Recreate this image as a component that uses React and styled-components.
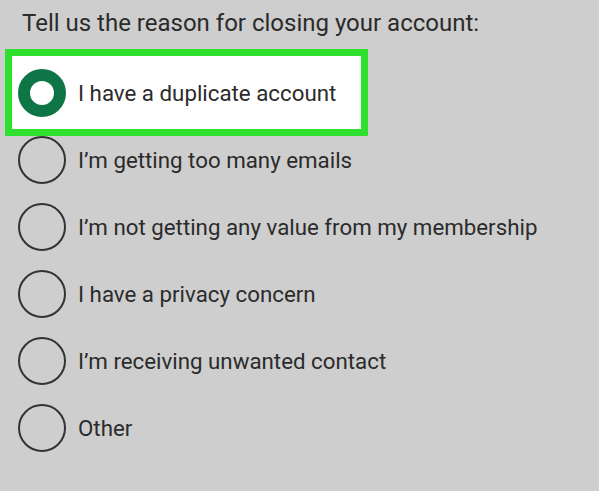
import React, { useState } from "react";
import styled, { createGlobalStyle } from "styled-components";

const GlobalStyle = createGlobalStyle`
  html, body {
    margin: 0;
    padding: 0;
    background: #cecece;
  }
  body {
    font-family: Roboto, "Noto Sans", Arial, sans-serif;
    color: #2b2b2b;
  }
`;

const Page = styled.div`
  width: 599px;
  height: 491px;
  padding: 9px 0 0 22px;
  box-sizing: border-box;
  background: #cecece;
  overflow: hidden;
`;

const Heading = styled.h1`
  margin: 0 0 22px 0;
  font-size: 24px;
  font-weight: 400;
  line-height: 28px;
  color: #2b2b2b;
`;

const List = styled.div`
  display: flex;
  flex-direction: column;
  margin-left: -7px;
`;

const Row = styled.label`
  display: flex;
  align-items: center;
  gap: 12px;
  height: 67px;
  padding-left: 3px;
  cursor: pointer;
  width: ${(p) => (p.$selected ? "343px" : "auto")};
  box-sizing: border-box;
  background: ${(p) => (p.$selected ? "#ffffff" : "transparent")};
  outline: ${(p) => (p.$selected ? "7px solid #2fe02f" : "none")};
  outline-offset: 3px;
  box-shadow: ${(p) => (p.$selected ? "0 0 0 3px #ffffff" : "none")};
`;

const Radio = styled.span`
  flex: none;
  width: 48px;
  height: 48px;
  border-radius: 50%;
  box-sizing: border-box;
  border: ${(p) => (p.$checked ? "12px solid #0e7646" : "2px solid #333333")};
  background: ${(p) => (p.$checked ? "#ffffff" : "transparent")};
`;

const Label = styled.span`
  font-size: 22.3px;
  line-height: 28px;
  color: #2b2b2b;
  white-space: nowrap;
`;

const reasons = [
  "I have a duplicate account",
  "I\u2019m getting too many emails",
  "I\u2019m not getting any value from my membership",
  "I have a privacy concern",
  "I\u2019m receiving unwanted contact",
  "Other",
];

export default function App() {
  const [selected, setSelected] = useState(0);

  return (
    <>
      <GlobalStyle />
      <Page>
        <Heading>Tell us the reason for closing your account:</Heading>
        <List>
          {reasons.map((r, i) => (
            <Row key={r} $selected={selected === i} onClick={() => setSelected(i)}>
              <Radio $checked={selected === i} />
              <Label>{r}</Label>
            </Row>
          ))}
        </List>
      </Page>
    </>
  );
}
